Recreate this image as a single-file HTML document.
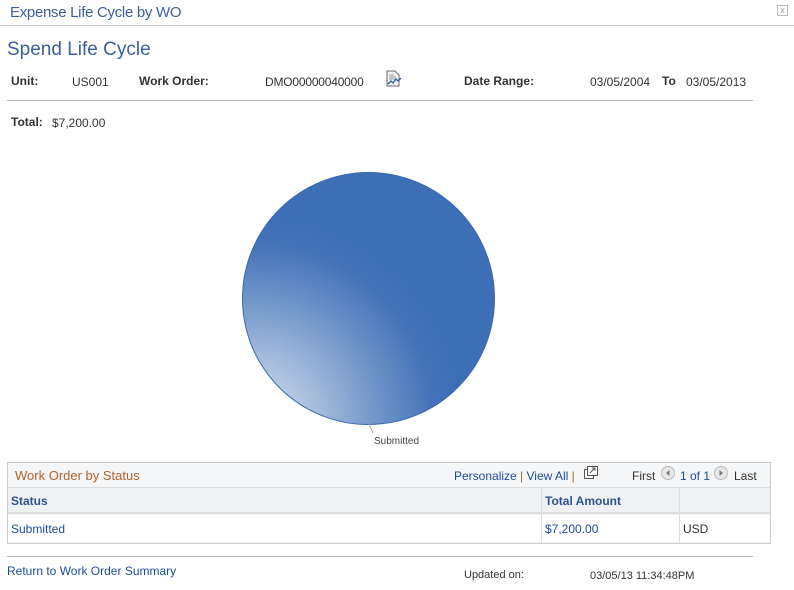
<!DOCTYPE html>
<html><head><style>
*{margin:0;padding:0;box-sizing:border-box}
body{width:794px;height:590px;background:#fff;font-family:"Liberation Sans",sans-serif;font-size:12px;color:#333;position:relative;overflow:hidden}
.a{position:absolute;white-space:nowrap}
.b{font-weight:bold;color:#333}
.l{color:#1c4c9c}
</style></head><body>
<div class="a" style="left:10px;top:4px;font-size:15px;color:#3b5f99;letter-spacing:-0.3px">Expense Life Cycle by WO</div>
<div class="a" style="left:777px;top:5px;width:11px;height:11px;border:1px solid #bbb;font-size:9px;line-height:9px;text-align:center;color:#999">x</div>
<div class="a" style="left:0;top:25px;width:794px;height:1px;background:#ccc"></div>
<div class="a" style="left:7px;top:39px;font-size:19px;color:#3b5f99">Spend Life Cycle</div>
<div class="a b" style="left:11px;top:74px">Unit:</div>
<div class="a" style="left:72px;top:75px">US001</div>
<div class="a b" style="left:139px;top:74px">Work Order:</div>
<div class="a" style="left:265px;top:75px;letter-spacing:-0.2px">DMO00000040000</div>
<svg class="a" style="left:385px;top:70px" width="18" height="18" viewBox="0 0 18 18"><path d="M2 1h8l4 4v11H2z" fill="#f4f4f4" stroke="#666"/><path d="M4 5h5M4 7h7M4 9h7" stroke="#999"/><path d="M3 14l3-3 2 2 3-4 2 2 3-3" fill="none" stroke="#2a5caa" stroke-width="1.3"/></svg>
<div class="a b" style="left:464px;top:74px">Date Range:</div>
<div class="a" style="left:590px;top:75px">03/05/2004</div>
<div class="a b" style="left:662px;top:74px">To</div>
<div class="a" style="left:686px;top:75px">03/05/2013</div>
<div class="a" style="left:7px;top:100px;width:746px;height:1px;background:#bbb"></div>
<div class="a b" style="left:11px;top:115px">Total:</div>
<div class="a" style="left:52px;top:116px">$7,200.00</div>
<div class="a" style="left:242px;top:172px;width:253px;height:253px;border-radius:50%;border:1px solid #3a68b0;background:radial-gradient(circle at 4% 100%,#d6e0f0 0%,#a8bedd 18%,#6f95c8 36%,#4472b8 52%,#3d6fb6 60%,#3d6fb6 100%)"></div>
<svg class="a" style="left:360px;top:424px" width="20" height="14"><path d="M9 0l4 9" stroke="#aaa"/></svg>
<div class="a" style="left:374px;top:436px;font-size:10px;color:#444">Submitted</div>
<div class="a" style="left:7px;top:462px;width:764px;height:82px;border:1px solid #ccc;background:#f5f6f7"></div>
<div class="a" style="left:15px;top:468px;font-size:13px;color:#b0622a">Work Order by Status</div>
<div class="a" style="left:454px;top:469px;color:#1c4c9c">Personalize <span style="color:#b0622a">|</span> View All <span style="color:#b0622a">|</span></div>
<svg class="a" style="left:584px;top:466px" width="14" height="13"><rect x="0.5" y="3.5" width="9" height="9" fill="#fff" stroke="#555"/><rect x="3.5" y="0.5" width="10" height="9" fill="#fff" stroke="#555"/><path d="M6 7l5-5M8 2h3v3" stroke="#555" fill="none"/></svg>
<div class="a" style="left:632px;top:469px;color:#333">First</div>
<svg class="a" style="left:661px;top:466px" width="14" height="14"><circle cx="7" cy="7" r="6.5" fill="#e8e8e8" stroke="#bbb"/><path d="M8.5 4v6L5 7z" fill="#777"/></svg>
<div class="a" style="left:680px;top:469px;color:#1c4c9c">1 of 1</div>
<svg class="a" style="left:714px;top:466px" width="14" height="14"><circle cx="7" cy="7" r="6.5" fill="#e8e8e8" stroke="#bbb"/><path d="M5.5 4v6L9 7z" fill="#777"/></svg>
<div class="a" style="left:734px;top:469px;color:#333">Last</div>
<div class="a" style="left:8px;top:487px;width:762px;height:1px;background:#ddd"></div>
<div class="a" style="left:8px;top:488px;width:762px;height:26px;background:#f0f1f2;border-bottom:2px solid #ddd"></div>
<div class="a" style="left:541px;top:488px;width:1px;height:55px;background:#ddd"></div>
<div class="a" style="left:679px;top:488px;width:1px;height:55px;background:#ddd"></div>
<div class="a" style="left:8px;top:515px;width:762px;height:27px;background:#fff"></div>
<div class="a" style="left:541px;top:515px;width:1px;height:27px;background:#ddd"></div>
<div class="a" style="left:679px;top:515px;width:1px;height:27px;background:#ddd"></div>
<div class="a" style="left:11px;top:494px;font-weight:bold;color:#2c5590">Status</div>
<div class="a" style="left:545px;top:494px;font-weight:bold;color:#2c5590">Total Amount</div>
<div class="a l" style="left:11px;top:522px">Submitted</div>
<div class="a l" style="left:545px;top:522px">$7,200.00</div>
<div class="a" style="left:683px;top:522px">USD</div>
<div class="a" style="left:7px;top:556px;width:746px;height:1px;background:#bbb"></div>
<div class="a l" style="left:7px;top:564px">Return to Work Order Summary</div>
<div class="a" style="left:464px;top:569px;font-size:11px">Updated on:</div>
<div class="a" style="left:590px;top:570px;font-size:11px">03/05/13 11:34:48PM</div>
</body></html>
